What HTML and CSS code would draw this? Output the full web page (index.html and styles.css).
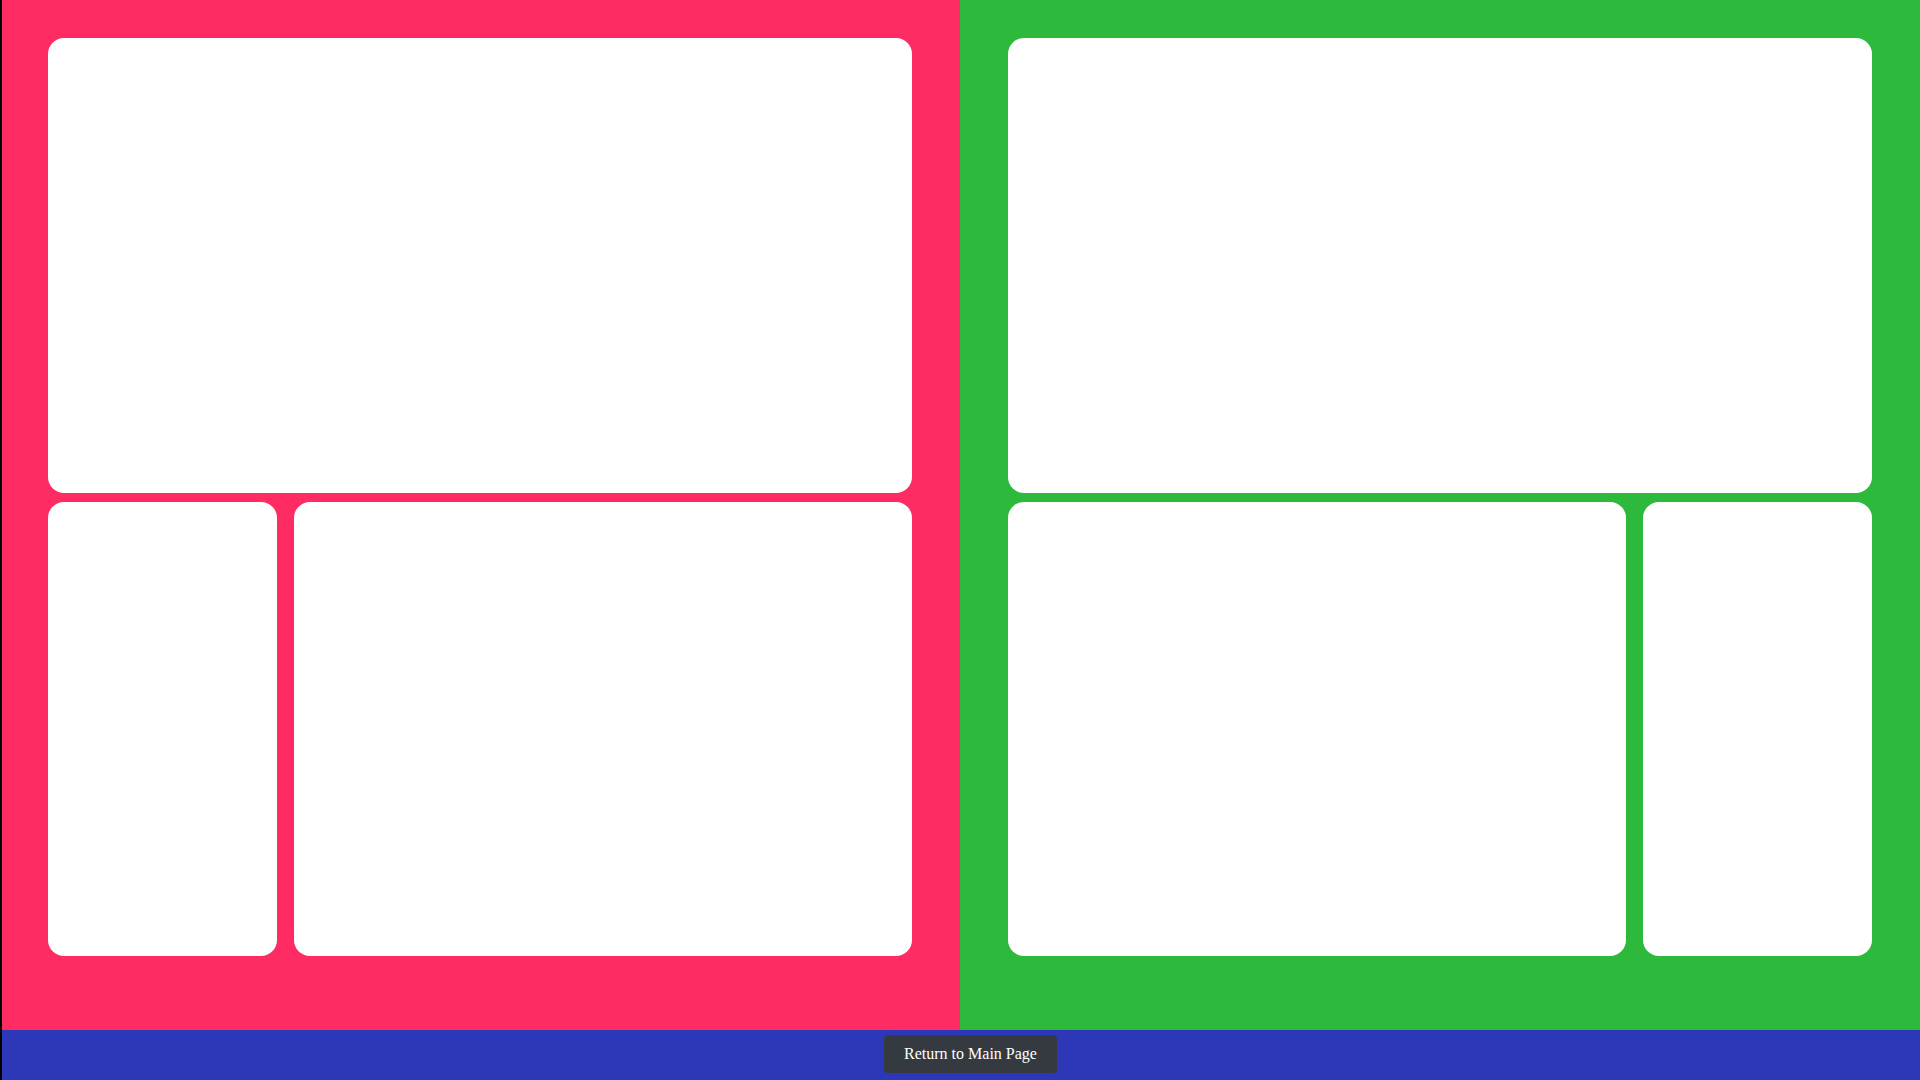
FILE: index.html
```html
<!DOCTYPE html>
<html lang="en">
<head>
<meta charset="utf-8">
<title>Layout</title>
<link rel="stylesheet" href="styles.css">
</head>
<body>
<div class="page">
  <main class="panels">
    <section class="panel panel-pink">
      <div class="card card-top"></div>
      <div class="row row-left">
        <div class="card"></div>
        <div class="card"></div>
      </div>
    </section>
    <section class="panel panel-green">
      <div class="card card-top"></div>
      <div class="row row-right">
        <div class="card"></div>
        <div class="card"></div>
      </div>
    </section>
  </main>
  <footer class="footer">
    <button class="btn-return" type="button">Return to Main Page</button>
  </footer>
</div>
</body>
</html>
```

FILE: styles.css
```css
html, body {
  margin: 0;
  padding: 0;
  height: 100%;
  overflow: hidden;
}

body {
  background: #000;
  font-family: "Liberation Serif", "Times New Roman", serif;
}

.page {
  margin-left: 2px;
  width: 1918px;
  height: 1080px;
  display: flex;
  flex-direction: column;
}

.panels {
  display: flex;
  height: 1030px;
}

.panel {
  box-sizing: border-box;
  height: 1030px;
  padding-top: 38px;
  padding-bottom: 74px;
  display: flex;
  flex-direction: column;
  gap: 9px;
}

.panel-pink {
  width: 958px;
  background: #ff2c64;
  padding-left: 46px;
  padding-right: 48px;
}

.panel-green {
  width: 960px;
  background: #2db93c;
  padding-left: 48px;
  padding-right: 48px;
}

.card {
  background: #ffffff;
  border-radius: 16px;
}

.card-top {
  height: 455px;
  flex: none;
}

.row {
  display: grid;
  gap: 17px;
  height: 454px;
  flex: none;
}

.row-left {
  grid-template-columns: 229px 1fr;
}

.row-right {
  grid-template-columns: 1fr 229px;
}

.footer {
  height: 50px;
  background: #2d38b9;
  display: flex;
  justify-content: center;
  align-items: flex-start;
  padding-left: 19px;
  box-sizing: border-box;
}

.btn-return {
  margin-top: 5px;
  height: 38px;
  padding: 0 20px;
  background: #343a40;
  color: #ffffff;
  border: 0;
  border-radius: 4px;
  font-family: "Liberation Serif", "Times New Roman", serif;
  font-size: 16px;
  line-height: 1.5;
  cursor: pointer;
}
```
